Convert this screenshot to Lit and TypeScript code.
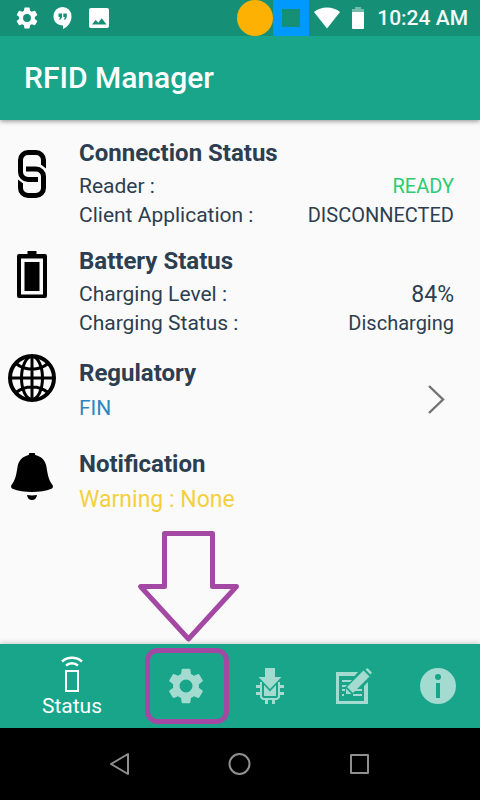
import { LitElement, html, css, svg } from "lit";
import { customElement } from "lit/decorators.js";

const gear = svg`<path d="M19.14 12.94c.04-.3.06-.61.06-.94 0-.32-.02-.64-.07-.94l2.03-1.58c.18-.14.23-.41.12-.61l-1.92-3.32c-.12-.22-.37-.29-.59-.22l-2.39.96c-.5-.38-1.03-.7-1.62-.94l-.36-2.54c-.04-.24-.24-.41-.48-.41h-3.84c-.24 0-.43.17-.47.41l-.36 2.54c-.59.24-1.13.57-1.62.94l-2.39-.96c-.22-.08-.47 0-.59.22L2.74 8.87c-.12.21-.08.47.12.61l2.03 1.58c-.05.3-.09.63-.09.94s.02.64.07.94l-2.03 1.58c-.18.14-.23.41-.12.61l1.92 3.32c.12.22.37.29.59.22l2.39-.96c.5.38 1.03.7 1.62.94l.36 2.54c.05.24.24.41.48.41h3.84c.24 0 .44-.17.47-.41l.36-2.54c.59-.24 1.13-.56 1.62-.94l2.39.96c.22.08.47 0 .59-.22l1.92-3.32c.12-.22.07-.47-.12-.61l-2.01-1.58zM12 15.6A3.6 3.6 0 1 1 12 8.4a3.6 3.6 0 0 1 0 7.2z"/>`;

@customElement("app-root")
export class AppRoot extends LitElement {
  static styles = css`
    :host {
      display: flex;
      flex-direction: column;
      min-height: 100vh;
      background: #fafafa;
      color: #2c3e50;
      font-family: Roboto, "Noto Sans", sans-serif;
    }
    svg { display: block; flex: none; }
    button {
      border: 0;
      padding: 0;
      margin: 0;
      background: none;
      font: inherit;
      color: inherit;
      cursor: pointer;
    }
    .statusbar {
      display: flex;
      align-items: center;
      height: 36px;
      padding: 0 12px 0 16px;
      background: #168f77;
      color: #fff;
    }
    .tray { display: flex; align-items: center; gap: 14px; flex: 1; }
    .battery { margin: 0 12px 0 11px; }
    .wifi { margin-left: 5px; }
    .time { font-size: 21px; font-weight: 500; line-height: 36px; color: #f2f9f8; }
    .appbar {
      display: flex;
      align-items: center;
      height: 84px;
      padding: 0 24px;
      background: #18a589;
      color: #fff;
      box-shadow: 0 1px 5px rgba(0, 0, 0, 0.45);
      clip-path: inset(0 0 -8px 0);
    }
    h1 { margin: 0; font-size: 30px; font-weight: 500; line-height: 36px; }
    main {
      flex: 1;
      display: flex;
      flex-direction: column;
      gap: 16px;
      padding: 18px 26px 16px 8px;
    }
    .compact { display: flex; flex-direction: column; gap: 26px; padding-top: 4px; }
    section { display: flex; gap: 23px; }
    .body { flex: 1; min-width: 0; }
    .icon-low { margin-top: 12px; }
    .icon-mid { margin-top: 4px; }
    .icon-high { margin-top: -4px; }
    h2 { margin: 0 0 4px; font-size: 24px; font-weight: 700; line-height: 30px; }
    .compact h2 { margin-bottom: 6px; }
    dl { margin: 0; }
    .row { display: flex; justify-content: space-between; line-height: 29px; }
    dt { font-size: 21px; }
    dd { margin: 0; font-size: 20px; }
    .level { font-size: 23px; }
    .ready { color: #2ecc71; }
    p { margin: 0; line-height: 29px; }
    .region { font-size: 21px; color: #2e86c1; }
    .warning { font-size: 23px; color: #f4d03f; }
    .open { align-self: flex-end; margin-right: 8px; }
    nav {
      display: grid;
      grid-template-columns: 12fr repeat(4, 7fr);
      height: 84px;
      background: #18a589;
      box-shadow: 0 -1px 5px rgba(0, 0, 0, 0.2);
    }
    .tab {
      position: relative;
      display: flex;
      flex-direction: column;
      align-items: center;
      justify-content: center;
      color: #a3dbd0;
    }
    .tab.active { padding-top: 4px; color: #fff; }
    .label { font-size: 21px; line-height: 28px; }
    .callout {
      position: absolute;
      bottom: 2px;
      left: calc(50% - 50px);
      pointer-events: none;
    }
    .system {
      display: grid;
      grid-template-columns: repeat(3, 120px);
      justify-content: center;
      height: 72px;
      background: #000;
    }
    .system button { display: flex; align-items: center; justify-content: center; }
  `;

  render() {
    return html`
      <div class="statusbar">
        <div class="tray">
          <svg width="22" height="22" viewBox="2 2 20 20" fill="#fff">${gear}</svg>
          <svg width="22" height="24" viewBox="0 0 22 24" fill="#fff">
            <path fill-rule="evenodd" d="M10.500 1a9 9 0 0 0-9 9.500c0 5.200 4 9 9.500 9V23c5.500-2.600 8.500-7.500 8.500-12.500A9 9 0 0 0 10.500 1zM6.500 7.500h3.500v3.500l-1.400 2.500H7L8.100 11H6.500zM11.300 7.500h3.500v3.500l-1.400 2.500h-1.600l1.100-2.500h-1.600z"/>
          </svg>
          <svg width="22" height="20" viewBox="0 0 22 20" fill="#fff">
            <path fill-rule="evenodd" d="M3 0h16a2 2 0 0 1 2 2v16a2 2 0 0 1-2 2H3a2 2 0 0 1-2-2V2a2 2 0 0 1 2-2zM4 16.500h14.500l-4.800-6.300-3.500 4.600-2.500-3z"/>
          </svg>
        </div>
        <svg width="72" height="36" viewBox="0 0 72 36">
          <circle cx="18" cy="18" r="18" fill="#fcb103"/>
          <path fill="#0099ff" fill-rule="evenodd" d="M36 0h36v36H36zM45 9v18h18V9z"/>
        </svg>
        <svg class="wifi" width="26" height="22" viewBox="0 0 26 22" fill="#fff">
          <path d="M13 21.500L0 5C3.500 2 8 .5 13 .5S22.500 2 26 5z"/>
        </svg>
        <svg class="battery" width="14" height="22" viewBox="0 0 14 22" fill="#fff">
          <path opacity=".4" d="M4 0h6v2h3v3H1V2h3z"/>
          <path d="M1 5h12v16a1 1 0 0 1-1 1H2a1 1 0 0 1-1-1z"/>
        </svg>
        <span class="time">10:24 AM</span>
      </div>

      <header class="appbar"><h1>RFID Manager</h1></header>

      <main>
        <section>
          <svg class="icon-low" width="48" height="48" viewBox="0 0 48 48">
            <g fill="none" stroke="#000" stroke-width="5">
              <path d="M35.500 15V10a7.500 7.500 0 0 0-7.500-7.500H20A7.500 7.500 0 0 0 12.500 10v12a7.500 7.500 0 0 0 7.500 7.500h10"/>
              <path d="M12.500 33v5a7.500 7.500 0 0 0 7.500 7.500h8a7.500 7.500 0 0 0 7.500-7.500V26.500a7.500 7.500 0 0 0-7.500-7.500H18"/>
            </g>
            <path d="M33 14.500h5V18.500zM10 29.500l5 4h-5z"/>
          </svg>
          <div class="body">
            <h2>Connection Status</h2>
            <dl>
              <div class="row"><dt>Reader :</dt><dd class="ready">READY</dd></div>
              <div class="row"><dt>Client Application :</dt><dd>DISCONNECTED</dd></div>
            </dl>
          </div>
        </section>

        <section>
          <svg class="icon-mid" width="48" height="48" viewBox="0 0 48 48">
            <path fill-rule="evenodd" d="M19.500 1h9v3H37a2 2 0 0 1 2 2v40a2 2 0 0 1-2 2H11a2 2 0 0 1-2-2V6a2 2 0 0 1 2-2h8.500zM13 8.500v36h22v-36z"/>
            <path d="M16.500 12h15v29h-15z"/>
          </svg>
          <div class="body">
            <h2>Battery Status</h2>
            <dl>
              <div class="row"><dt>Charging Level :</dt><dd class="level">84%</dd></div>
              <div class="row"><dt>Charging Status :</dt><dd>Discharging</dd></div>
            </dl>
          </div>
        </section>

        <div class="compact">
          <section>
            <svg class="icon-high" width="48" height="48" viewBox="0 0 48 48" fill="none" stroke="#000" stroke-width="3">
              <circle cx="24" cy="24" r="22" stroke-width="4"/>
              <ellipse cx="24" cy="24" rx="10.500" ry="21.500"/>
              <path d="M24 2v44M2 24h44M8 9.500c9 7.500 23 7.500 32 0M8 38.500c9-7.500 23-7.500 32 0"/>
            </svg>
            <div class="body">
              <h2>Regulatory</h2>
              <p class="region">FIN</p>
            </div>
            <button class="open" aria-label="Open regulatory settings">
              <svg width="20" height="48" viewBox="0 0 20 48" fill="none" stroke="#727272" stroke-width="2.400">
                <path d="M3 11l14 13.500L3 38"/>
              </svg>
            </button>
          </section>

          <section>
            <svg class="icon-mid" width="48" height="48" viewBox="0 1 48 48">
              <path d="M24 0a3.200 3.200 0 0 1 3.200 3C34 4.500 37.500 9 38.500 15c1.200 7.500 2 13 6 18 .8 1.300.5 3-1 3.800C38 39 31 40 24 40S10 39 4.500 36.800c-1.500-.8-1.800-2.500-1-3.800 4-5 4.800-10.500 6-18C10.500 9 14 4.500 20.800 3A3.200 3.200 0 0 1 24 0z"/>
              <path d="M19 43c3 .6 7 .6 10 0-.3 3-2.300 5-5 5s-4.700-2-5-5z"/>
            </svg>
            <div class="body">
              <h2>Notification</h2>
              <p class="warning">Warning : None</p>
            </div>
          </section>
        </div>
      </main>

      <nav>
        <button class="tab active">
          <svg width="36" height="36" viewBox="0 0 36 36" fill="none" stroke="#fff" stroke-width="2">
            <path d="M12 15h12v20H12z"/>
            <path stroke-width="2.500" d="M12 9.500c3.500-3 8.500-3 12 0M8 5.500c5.500-5 14.500-5 20 0"/>
          </svg>
          <span class="label">Status</span>
        </button>
        <button class="tab" aria-label="Settings">
          <svg width="36" height="36" viewBox="2 2 20 20" fill="currentColor">${gear}</svg>
          <svg class="callout" width="104" height="196" viewBox="0 0 104 196" fill="none" stroke="#a349a4" stroke-width="5" stroke-linejoin="round">
            <path d="M28.500 3.500h48v53h24L52.500 109 4.500 56.500h24z"/>
            <rect x="11.500" y="120.500" width="79" height="71" rx="10"/>
          </svg>
        </button>
        <button class="tab" aria-label="Firmware update">
          <svg width="36" height="36" viewBox="0 0 36 36" fill="currentColor">
            <path d="M13 0h10v9h6.500L18 21 6.500 9H13z"/>
            <path d="M12 17l6 6.500 6-6.500v11H12z"/>
            <path fill="none" stroke="currentColor" stroke-width="2" d="M9 14v15l2 2h14l2-2V14"/>
            <path d="M4 17h4v3H4zM4 24h4v3H4zM28 17h4v3h-4zM28 24h4v3h-4zM13 32h3v4h-3zM20 32h3v4h-3z"/>
          </svg>
        </button>
        <button class="tab" aria-label="Edit log">
          <svg width="36" height="36" viewBox="0 0 36 36" fill="currentColor">
            <path d="M0 4h22l-3.500 4H3v25h25V18l4-4v22H0z"/>
            <path d="M6 12h10l-2 2H6zM6 17h5l-2 2H6zM6 21h3v2H6zM6 26h2v2H6zM17 26h9v2h-9zM20 21h6v2h-8z"/>
            <path d="M27.500 2.500L33.500 8.500 17 25l-6-6zM10 20.500L15.500 26H10zM29.500 1.500L31.500 0 36 4.500 34.500 6.500z"/>
          </svg>
        </button>
        <button class="tab" aria-label="About">
          <svg width="36" height="36" viewBox="0 0 36 36" fill="currentColor">
            <path fill-rule="evenodd" d="M18 0a18 18 0 1 1 0 36 18 18 0 0 1 0-36zM16 15v15h4V15zM18 6a3 3 0 1 0 0 6 3 3 0 0 0 0-6z"/>
          </svg>
        </button>
      </nav>

      <div class="system">
        <button aria-label="Back">
          <svg width="24" height="24" viewBox="0 0 24 24" fill="none" stroke="#8f8f8f" stroke-width="2" stroke-linejoin="round"><path d="M20 2v20L3 12z"/></svg>
        </button>
        <button aria-label="Home">
          <svg width="24" height="24" viewBox="0 0 24 24" fill="none" stroke="#8f8f8f" stroke-width="2"><circle cx="11.500" cy="12" r="10"/></svg>
        </button>
        <button aria-label="Recent apps">
          <svg width="24" height="24" viewBox="0 0 24 24" fill="none" stroke="#8f8f8f" stroke-width="2" stroke-linejoin="round"><path d="M3 3h17v18H3z"/></svg>
        </button>
      </div>
    `;
  }
}
